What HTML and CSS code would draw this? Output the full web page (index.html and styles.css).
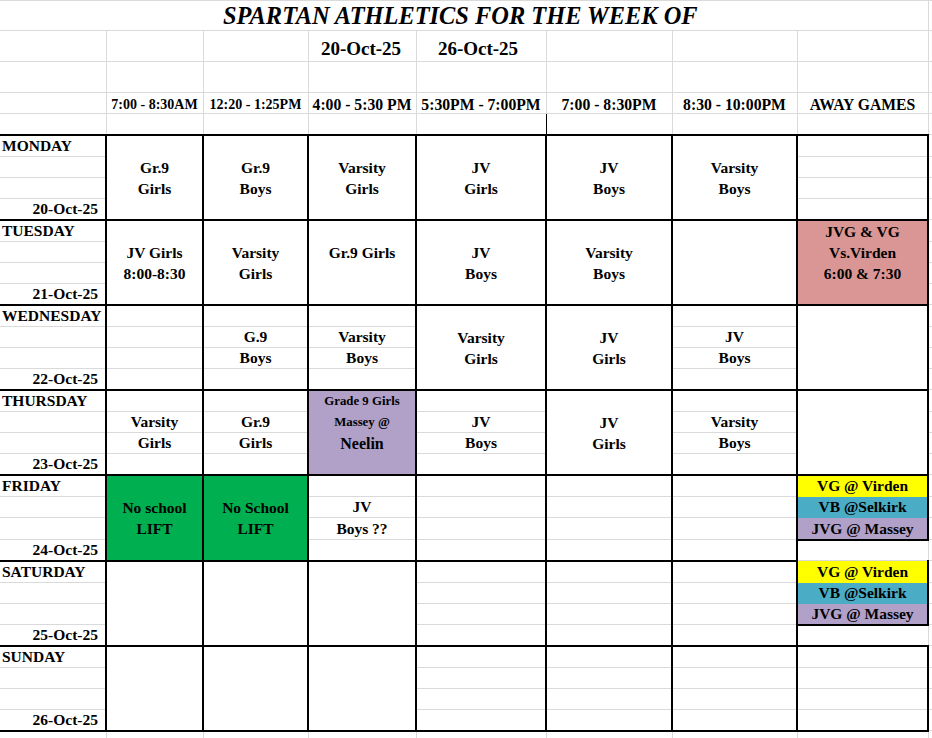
FILE: index.html
```html
<!DOCTYPE html>
<html>
<head>
<meta charset="utf-8">
<title>Spartan Athletics</title>
<link rel="stylesheet" href="styles.css">
</head>
<body>
<table class="sheet">
<colgroup>
<col class="w0"><col class="w1"><col class="w2"><col class="w3"><col class="w4"><col class="w5"><col class="w6"><col class="w7"><col class="wf">
</colgroup>
<tbody>
<tr class="r30"><td class="c0 title" colspan="8">SPARTAN ATHLETICS FOR THE WEEK OF</td><td class="f"></td></tr>
<tr class="r31"><td class="c0"></td><td></td><td></td><td class="hd hd1">20-Oct-25</td><td class="hd hd2">26-Oct-25</td><td></td><td></td><td></td><td class="f"></td></tr>
<tr class="r31"><td class="c0"></td><td></td><td></td><td></td><td></td><td></td><td></td><td></td><td class="f"></td></tr>
<tr class="r21"><td class="c0"></td><td class="tm">7:00 - 8:30AM</td><td class="tm">12:20 - 1:25PM</td><td class="tm tb">4:00 - 5:30 PM</td><td class="tm tb">5:30PM - 7:00PM</td><td class="tm tb">7:00 - 8:30PM</td><td class="tm tb">8:30 - 10:00PM</td><td class="tm tb">AWAY GAMES</td><td class="f"></td></tr>
<tr class="r21"><td class="c0"></td><td></td><td></td><td></td><td class="kr"></td><td></td><td></td><td></td><td class="f"></td></tr>

<!-- MONDAY -->
<tr class="day d1 s22"><td class="c0 dn">MONDAY</td>
<td class="m" rowspan="4"><div class="l"></div><div class="l">Gr.9</div><div class="l">Girls</div></td>
<td class="m" rowspan="4"><div class="l"></div><div class="l">Gr.9</div><div class="l">Boys</div></td>
<td class="m" rowspan="4"><div class="l"></div><div class="l">Varsity</div><div class="l">Girls</div></td>
<td class="m" rowspan="4"><div class="l"></div><div class="l">JV</div><div class="l">Girls</div></td>
<td class="m" rowspan="4"><div class="l"></div><div class="l">JV</div><div class="l">Boys</div></td>
<td class="m" rowspan="4"><div class="l"></div><div class="l">Varsity</div><div class="l">Boys</div></td>
<td></td><td class="f"></td></tr>
<tr class="day d2 s21"><td class="c0"></td><td></td><td class="f"></td></tr>
<tr class="day d3 s21"><td class="c0"></td><td></td><td class="f"></td></tr>
<tr class="day d4 s21"><td class="c0 dt">20-Oct-25</td><td></td><td class="f"></td></tr>

<!-- TUESDAY -->
<tr class="day d1 s22"><td class="c0 dn">TUESDAY</td>
<td class="m" rowspan="4"><div class="l"></div><div class="l">JV Girls</div><div class="l">8:00-8:30</div></td>
<td class="m" rowspan="4"><div class="l"></div><div class="l">Varsity</div><div class="l">Girls</div></td>
<td class="m" rowspan="4"><div class="l"></div><div class="l">Gr.9 Girls</div></td>
<td class="m" rowspan="4"><div class="l"></div><div class="l">JV</div><div class="l">Boys</div></td>
<td class="m" rowspan="4"><div class="l"></div><div class="l">Varsity</div><div class="l">Boys</div></td>
<td class="m" rowspan="4"></td>
<td class="m pnk" rowspan="4"><div class="l">JVG &amp; VG</div><div class="l">Vs.Virden</div><div class="l">6:00 &amp; 7:30</div></td>
<td class="f"></td></tr>
<tr class="day d2 s21"><td class="c0"></td><td class="f"></td></tr>
<tr class="day d3 s21"><td class="c0"></td><td class="f"></td></tr>
<tr class="day d4 s21"><td class="c0 dt">21-Oct-25</td><td class="f"></td></tr>

<!-- WEDNESDAY -->
<tr class="day d1 s22"><td class="c0 dn">WEDNESDAY</td>
<td></td><td></td><td></td>
<td class="m" rowspan="4"><div class="l"></div><div class="l">Varsity</div><div class="l">Girls</div></td>
<td class="m" rowspan="4"><div class="l"></div><div class="l">JV</div><div class="l">Girls</div></td>
<td></td>
<td class="m" rowspan="4"></td>
<td class="f"></td></tr>
<tr class="day d2 s21"><td class="c0"></td><td></td><td>G.9</td><td>Varsity</td><td>JV</td><td class="f"></td></tr>
<tr class="day d3 s21"><td class="c0"></td><td></td><td>Boys</td><td>Boys</td><td>Boys</td><td class="f"></td></tr>
<tr class="day d4 s21"><td class="c0 dt">22-Oct-25</td><td></td><td></td><td></td><td></td><td class="f"></td></tr>

<!-- THURSDAY -->
<tr class="day d1 s22"><td class="c0 dn">THURSDAY</td>
<td></td><td></td>
<td class="m prp" rowspan="4"><div class="l sm">Grade 9 Girls</div><div class="l sm">Massey @</div><div class="l lg">Neelin</div></td>
<td></td>
<td class="m" rowspan="4"><div class="l"></div><div class="l">JV</div><div class="l">Girls</div></td>
<td></td>
<td class="m" rowspan="4"></td>
<td class="f"></td></tr>
<tr class="day d2 s21"><td class="c0"></td><td>Varsity</td><td>Gr.9</td><td>JV</td><td>Varsity</td><td class="f"></td></tr>
<tr class="day d3 s21"><td class="c0"></td><td>Girls</td><td>Girls</td><td>Boys</td><td>Boys</td><td class="f"></td></tr>
<tr class="day d4 s21"><td class="c0 dt">23-Oct-25</td><td></td><td></td><td></td><td></td><td class="f"></td></tr>

<!-- FRIDAY -->
<tr class="day d1 s22"><td class="c0 dn">FRIDAY</td>
<td class="m grn" rowspan="4"><div class="l"></div><div class="l">No school</div><div class="l">LIFT</div></td>
<td class="m grn" rowspan="4"><div class="l"></div><div class="l">No School</div><div class="l">LIFT</div></td>
<td></td><td></td><td></td><td></td>
<td class="aw yel">VG @ Virden</td>
<td class="f"></td></tr>
<tr class="day d2 s21"><td class="c0"></td><td>JV</td><td></td><td></td><td></td><td class="aw tea">VB @Selkirk</td><td class="f"></td></tr>
<tr class="day d3 s22"><td class="c0"></td><td>Boys ??</td><td></td><td></td><td></td><td class="aw pur">JVG @ Massey</td><td class="f"></td></tr>
<tr class="day d4 s21"><td class="c0 dt">24-Oct-25</td><td></td><td></td><td></td><td></td><td class="op"></td><td class="f"></td></tr>

<!-- SATURDAY -->
<tr class="day d1 s22"><td class="c0 dn">SATURDAY</td>
<td class="m" rowspan="4"></td><td class="m" rowspan="4"></td><td class="m" rowspan="4"></td>
<td></td><td></td><td></td>
<td class="aw yel nt">VG @ Virden</td>
<td class="f"></td></tr>
<tr class="day d2 s21"><td class="c0"></td><td></td><td></td><td></td><td class="aw tea">VB @Selkirk</td><td class="f"></td></tr>
<tr class="day d3 s21"><td class="c0"></td><td></td><td></td><td></td><td class="aw pur">JVG @ Massey</td><td class="f"></td></tr>
<tr class="day d4 s21"><td class="c0 dt">25-Oct-25</td><td></td><td></td><td></td><td class="op2"></td><td class="f"></td></tr>

<!-- SUNDAY -->
<tr class="day d1 s22"><td class="c0 dn">SUNDAY</td>
<td class="m" rowspan="4"></td><td class="m" rowspan="4"></td><td class="m" rowspan="4"></td>
<td></td><td></td><td></td><td></td>
<td class="f"></td></tr>
<tr class="day d2 s21"><td class="c0"></td><td></td><td></td><td></td><td></td><td class="f"></td></tr>
<tr class="day d3 s21"><td class="c0"></td><td></td><td></td><td></td><td></td><td class="f"></td></tr>
<tr class="day d4 s21"><td class="c0 dt">26-Oct-25</td><td></td><td></td><td></td><td></td><td class="f"></td></tr>
<tr class="r21"><td class="c0"></td><td></td><td></td><td></td><td></td><td></td><td></td><td></td><td class="f"></td></tr>
</tbody>
</table>
</body>
</html>
```

FILE: styles.css
```css
html, body {
  margin: 0;
  padding: 0;
  overflow: hidden;
  background: #ffffff;
}

.sheet {
  table-layout: fixed;
  border-collapse: collapse;
  width: 938px;
  font-family: "Liberation Serif", "Times New Roman", serif;
  font-weight: bold;
  font-size: 15.5px;
  color: #000;
}

.w0 { width: 106px; }
.w1 { width: 97px; }
.w2 { width: 105px; }
.w3 { width: 108px; }
.w4 { width: 130px; }
.w5 { width: 126px; }
.w6 { width: 125px; }
.w7 { width: 131px; }
.wf { width: 10px; }

.r30 { height: 30px; }
.r31 { height: 31px; }
.r21 { height: 21px; }
.s21 { height: 21px; }
.s22 { height: 22px; }

.sheet td {
  border: 1px solid #dadada;
  padding: 0 2px 1px;
  vertical-align: bottom;
  text-align: center;
  line-height: 18px;
  white-space: nowrap;
  overflow: hidden;
}

/* thick borders of the day blocks */
.sheet tr.day td {
  border-left: 2px solid #000;
  border-right: 2px solid #000;
}
.sheet tr.d1 td { border-top: 2px solid #000; }
.sheet tr.d4 td { border-bottom: 2px solid #000; }

.sheet tr td.m {
  border: 2px solid #000;
  vertical-align: top;
  padding: 0 2px;
}

.sheet tr td.c0 { border-left: none; }

.sheet tr td.f {
  border: 1px solid #dadada;
}

.l {
  height: 21px;
  line-height: 21px;
}

.sheet tr td.title {
  font-size: 24.4px;
  font-style: italic;
  line-height: 28px;
  vertical-align: top;
  padding: 1px 7px 0 0;
  overflow: visible;
}

.sheet tr td.hd {
  font-size: 19px;
  line-height: 21px;
  padding-bottom: 2px;
}
.sheet tr td.hd1 { padding-right: 4px; }
.sheet tr td.hd2 { padding-right: 8px; }

.sheet tr td.tm {
  font-size: 14px;
  line-height: 16px;
  padding-bottom: 0;
}
.sheet tr td.tb { font-size: 15.7px; }

.sheet tr td.dn {
  text-align: left;
  padding-left: 2px;
}
.sheet tr td.dt {
  text-align: right;
  padding-right: 7px;
}

.sheet tr td.kr { border-right: 1px solid #000; }

.aw { font-size: 15.5px; }

.pnk { background: #da9694; }
.prp { background: #b1a0c7; }
.grn { background: #00b050; }

.sheet tr td.yel {
  background: #ffff00;
  border-bottom-color: #ffff00;
}
.sheet tr td.tea {
  background: #4bacc6;
  border-top-color: #ffff00;
  border-bottom-color: #4bacc6;
}
.sheet tr td.pur {
  background: #b1a0c7;
  border-top-color: #4bacc6;
  border-bottom: 2px solid #000;
}
.sheet tr td.nt { border-top: 1px solid #dadada; }
.sheet tr td.op {
  border-right: 1px solid #dadada;
  border-bottom: 1px solid #dadada;
}
.sheet tr td.op2 { border-right: 1px solid #dadada; }

.sm { font-size: 12.8px; }
.lg { font-size: 16px; }
```
